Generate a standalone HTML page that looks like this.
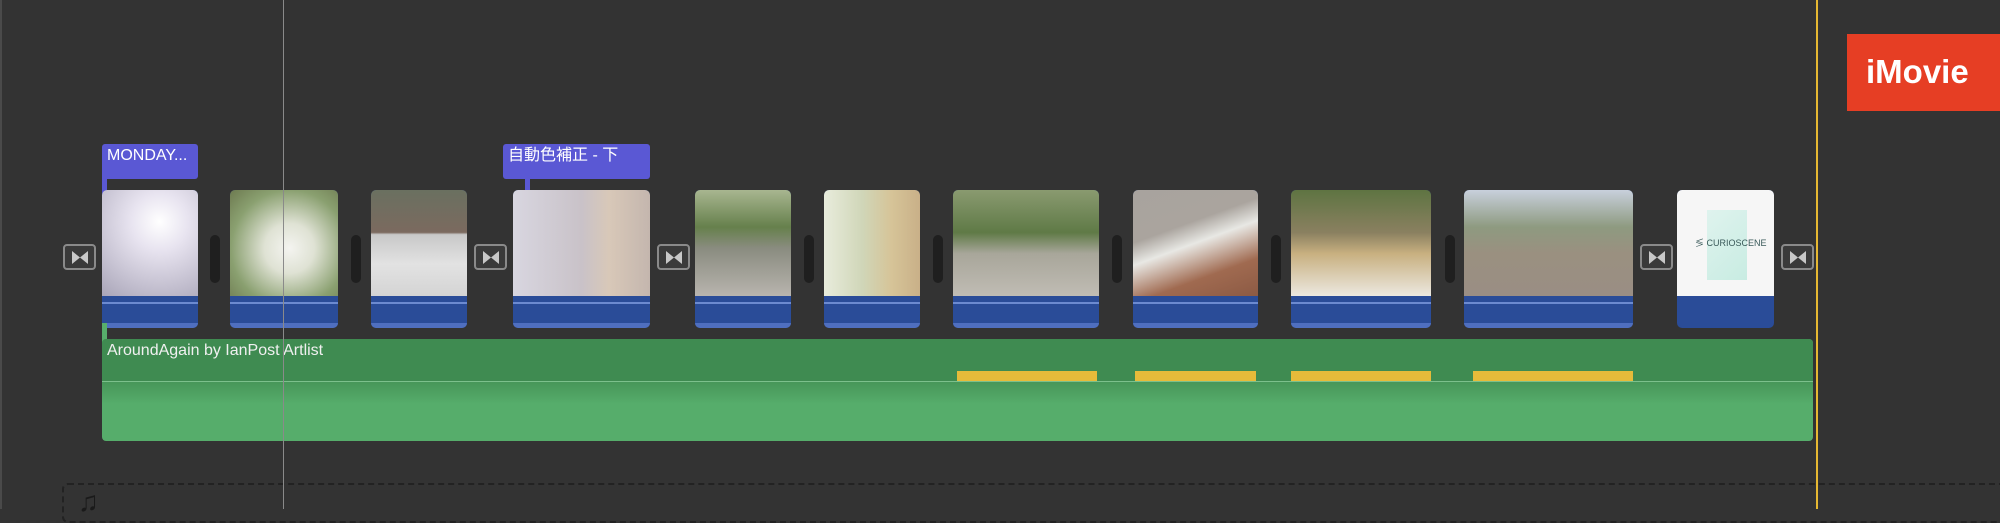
<!DOCTYPE html>
<html><head><meta charset="utf-8"><style>
*{margin:0;padding:0;box-sizing:border-box}
body{width:2000px;height:509px;background:#333333;position:relative;overflow:hidden;font-family:"Liberation Sans","Noto Sans CJK JP",sans-serif}
.a{position:absolute}
.clip{position:absolute;top:190px;height:138px;border-radius:5px;overflow:hidden;background:#2a4c98}
.clip .th{position:absolute;left:0;right:0;top:0;height:106px}
.clip .ln{position:absolute;left:0;right:0;top:112px;height:2px;background:#6c8ad0}
.clip .wv{position:absolute;left:0;right:0;bottom:0;height:5px;background:#4f6fbf}
.tr{position:absolute;top:244px;width:33px;height:26px;border:2px solid #8a8a8a;border-radius:4px;background:#3a3a3a}
.tr svg{position:absolute;left:6px;top:4px}
.gap{position:absolute;top:235px;width:10px;height:48px;border-radius:5px;background:#1f1f1f}
.lab{position:absolute;top:144px;height:35px;background:#5a58d4;border-radius:3px;color:#fff;font-size:16px;line-height:18px;padding:3px 5px}
</style></head><body>
<div class="a" style="left:0;top:0;width:2px;height:509px;background:#4a4a4a"></div>
<div class="a" style="left:62px;top:483px;width:1950px;height:40px;border:2px dashed #222;border-radius:6px"></div>
<div class="a" style="left:78px;top:488px;font-size:28px;line-height:28px;color:#1a1a1a">♫</div>

<div class="lab" style="left:102px;width:96px">MONDAY...</div>
<div class="a" style="left:102px;top:170px;width:5px;height:25px;background:#5a58d4"></div>
<div class="lab" style="left:503px;width:147px">自動色補正 - 下</div>
<div class="a" style="left:525px;top:170px;width:5px;height:25px;background:#5a58d4"></div>

<div class="clip" style="left:102px;width:96px"><div class="th" style="background:radial-gradient(circle at 60% 30%,#fff 0,#e8e4f0 30%,#a9a5b8 100%)"></div><div class="ln"></div><div class="wv"></div></div>
<div class="clip" style="left:230px;width:108px"><div class="th" style="background:radial-gradient(circle at 55% 55%,#f4f4f0 0,#dfe2d4 30%,#8aa070 70%,#6d7a50 100%)"></div><div class="ln"></div><div class="wv"></div></div>
<div class="clip" style="left:371px;width:96px"><div class="th" style="background:linear-gradient(#6a7060 0,#7b6a5f 40%,#c8c8c8 42%,#e2e2e2 70%,#d4d4d4 100%)"></div><div class="ln"></div><div class="wv"></div></div>
<div class="clip" style="left:513px;width:137px"><div class="th" style="background:linear-gradient(90deg,#d8d6e0,#c9c2c8 50%,#d8c8b8 70%,#c4b6ae)"></div><div class="ln"></div><div class="wv"></div></div>
<div class="clip" style="left:695px;width:96px"><div class="th" style="background:linear-gradient(#a8b690 0,#66804c 35%,#8a8c80 55%,#b8b4ae 100%)"></div><div class="ln"></div><div class="wv"></div></div>
<div class="clip" style="left:824px;width:96px"><div class="th" style="background:linear-gradient(90deg,#e8ecdc,#d0d6b8 40%,#d6c498 70%,#c9b088)"></div><div class="ln"></div><div class="wv"></div></div>
<div class="clip" style="left:953px;width:146px"><div class="th" style="background:linear-gradient(#8a9a70 0,#5f7a46 40%,#a8a69a 60%,#c0bcb4 100%)"></div><div class="ln"></div><div class="wv"></div></div>
<div class="clip" style="left:1133px;width:125px"><div class="th" style="background:linear-gradient(160deg,#a8a39e 0,#aaa49e 35%,#e8e8e4 50%,#a06a50 75%,#8c5a44 100%)"></div><div class="ln"></div><div class="wv"></div></div>
<div class="clip" style="left:1291px;width:140px"><div class="th" style="background:linear-gradient(#5e7442 0,#8a8060 40%,#c8b080 60%,#ece8e0 100%)"></div><div class="ln"></div><div class="wv"></div></div>
<div class="clip" style="left:1464px;width:169px"><div class="th" style="background:linear-gradient(#c8d0dc 0,#8e9a80 35%,#9a9080 60%,#9a8e84 100%)"></div><div class="ln"></div><div class="wv"></div></div>
<div class="clip" style="left:1677px;width:97px"><div class="th" style="background:#f6f6f6"><div class="a" style="left:30px;top:20px;width:40px;height:70px;background:linear-gradient(135deg,#dff3ee,#c8ece2)"></div><div class="a" style="left:18px;top:46px;font-size:9px;color:#3a5a5a">≶ CURIOSCENE</div></div></div>

<div class="tr" style="left:63px"><svg width="18" height="15" viewBox="0 0 18 15"><path d="M1 1L9 7.5L1 14ZM17 1L9 7.5L17 14Z" fill="#c8c8c8"/></svg></div>
<div class="tr" style="left:474px"><svg width="18" height="15" viewBox="0 0 18 15"><path d="M1 1L9 7.5L1 14ZM17 1L9 7.5L17 14Z" fill="#c8c8c8"/></svg></div>
<div class="tr" style="left:657px"><svg width="18" height="15" viewBox="0 0 18 15"><path d="M1 1L9 7.5L1 14ZM17 1L9 7.5L17 14Z" fill="#c8c8c8"/></svg></div>
<div class="tr" style="left:1640px"><svg width="18" height="15" viewBox="0 0 18 15"><path d="M1 1L9 7.5L1 14ZM17 1L9 7.5L17 14Z" fill="#c8c8c8"/></svg></div>
<div class="tr" style="left:1781px"><svg width="18" height="15" viewBox="0 0 18 15"><path d="M1 1L9 7.5L1 14ZM17 1L9 7.5L17 14Z" fill="#c8c8c8"/></svg></div>

<div class="gap" style="left:210px"></div>
<div class="gap" style="left:351px"></div>
<div class="gap" style="left:804px"></div>
<div class="gap" style="left:933px"></div>
<div class="gap" style="left:1112px"></div>
<div class="gap" style="left:1271px"></div>
<div class="gap" style="left:1445px"></div>

<div class="a" style="left:102px;top:323px;width:5px;height:20px;background:#57ae6c"></div>
<div class="a" style="left:102px;top:339px;width:1711px;height:102px;border-radius:4px;overflow:hidden;background:#56ad6b">
  <div class="a" style="left:0;top:0;width:100%;height:42px;background:#3f8b51"></div>
  <div class="a" style="left:0;top:42px;width:100%;height:1px;background:#7cc08c"></div>
  <div class="a" style="left:0;top:43px;width:100%;height:22px;background:linear-gradient(#479659,#56ad6b)"></div>
  <div class="a" style="left:855px;top:32px;width:140px;height:10px;background:#e6bb3a"></div>
  <div class="a" style="left:1033px;top:32px;width:121px;height:10px;background:#e6bb3a"></div>
  <div class="a" style="left:1189px;top:32px;width:140px;height:10px;background:#e6bb3a"></div>
  <div class="a" style="left:1371px;top:32px;width:160px;height:10px;background:#e6bb3a"></div>
  <div class="a" style="left:5px;top:3px;color:#f0f0f0;font-size:16px">AroundAgain by IanPost Artlist</div>
</div>

<div class="a" style="left:283px;top:0;width:1px;height:509px;background:#8a8a8a"></div>
<div class="a" style="left:1816px;top:0;width:2px;height:509px;background:#e6b832"></div>
<div class="a" style="left:1847px;top:34px;width:153px;height:77px;background:#e63e24;color:#fff;font-weight:bold;font-size:33px;padding:19px 0 0 19px">iMovie</div>
</body></html>
